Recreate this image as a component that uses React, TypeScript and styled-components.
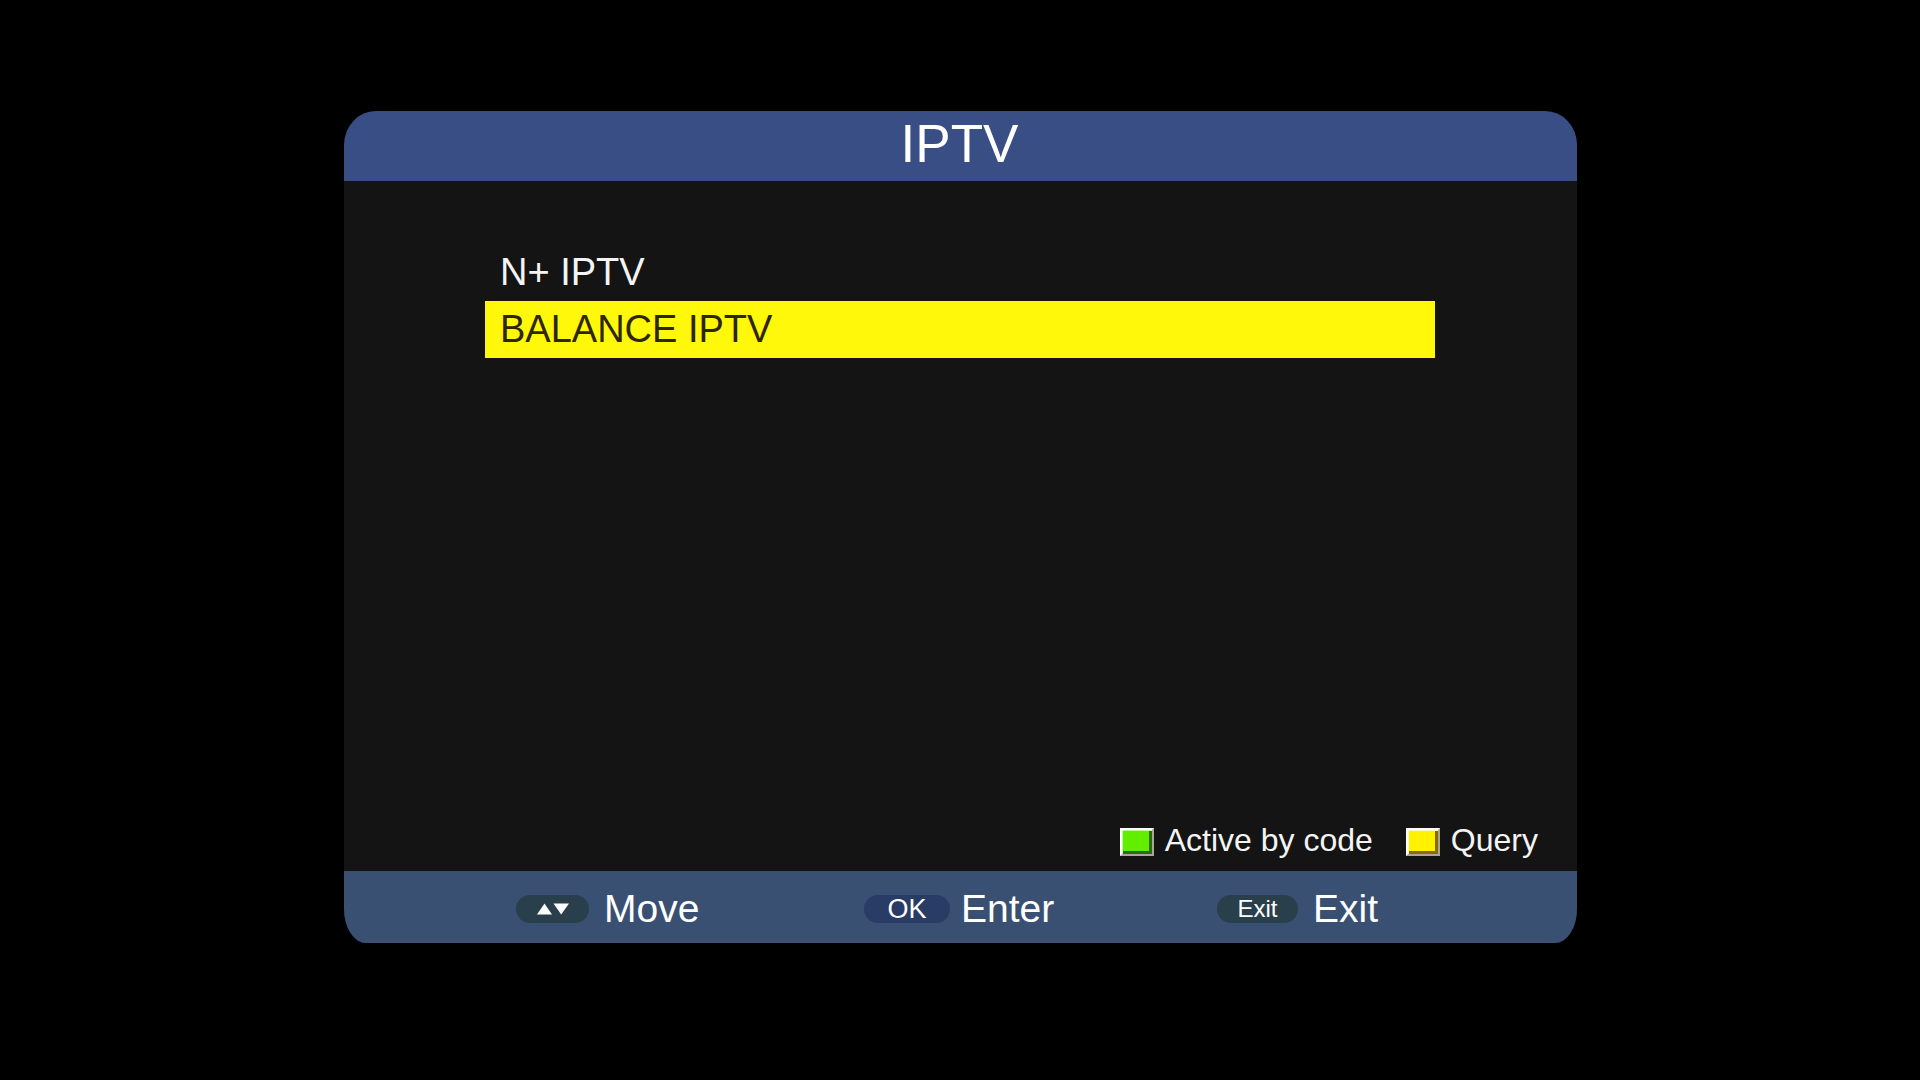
import { useState } from "react";
import styled, { createGlobalStyle } from "styled-components";

const GlobalStyle = createGlobalStyle`
  *, *::before, *::after { box-sizing: border-box; }
  body {
    margin: 0;
    background: #000;
    color: #f4f4f4;
    font-family: "Liberation Sans", Arial, sans-serif;
  }
  button {
    margin: 0;
    padding: 0;
    border: 0;
    background: none;
    color: inherit;
    font: inherit;
    cursor: pointer;
  }
`;

const Screen = styled.main`
  display: flex;
  min-height: 100vh;
  padding: 111px 343px 137px 344px;
`;

const Panel = styled.section`
  display: flex;
  flex: 1;
  flex-direction: column;
  overflow: hidden;
  border-radius: 32px 32px 22px 22px / 34px 34px 34px 34px;
  background: #141414;
`;

const Header = styled.header`
  display: flex;
  align-items: center;
  justify-content: center;
  height: 70px;
  background: #3a4e86;
`;

const Title = styled.h1`
  margin: 0;
  padding: 0 2px 4px 0;
  color: #fff;
  font-size: 53px;
  font-weight: 400;
  line-height: 60px;
`;

const Body = styled.div`
  display: flex;
  flex: 1;
  flex-direction: column;
  justify-content: space-between;
  padding: 63px 39px 7px 141px;
`;

const List = styled.ul`
  margin: 0 103px 0 0;
  padding: 0;
  list-style: none;
`;

const Entry = styled.button<{ $selected: boolean }>`
  display: block;
  width: 100%;
  height: 57px;
  padding: 0 15px 1px;
  background: ${(p) => (p.$selected ? "#fff80a" : "transparent")};
  color: ${(p) => (p.$selected ? "#2e2600" : "#f4f4f4")};
  font-size: 38px;
  line-height: 56px;
  text-align: left;
`;

const Legend = styled.div`
  display: flex;
  justify-content: flex-end;
  gap: 33px;
`;

const ColorKey = styled.button`
  display: flex;
  align-items: center;
  gap: 11px;
  font-size: 32px;
  line-height: 40px;
`;

const Label = styled.span`
  padding-bottom: 4px;
`;

const Swatch = styled.span<{ $fill: string; $light: string; $shade: string }>`
  width: 34px;
  height: 28px;
  border: 2px solid;
  border-color: #fff #a8a898 #a8a898 #fff;
  background: ${(p) => p.$fill};
  box-shadow: inset 1px 1px ${(p) => p.$light}, inset -3px -3px ${(p) => p.$shade};
`;

const Footer = styled.footer`
  display: grid;
  grid-template-columns: 348fr 353fr 360fr;
  align-items: center;
  height: 72px;
  padding-left: 172px;
  background: #395073;
`;

const Hint = styled.button<{ $gap: number }>`
  display: flex;
  align-items: center;
  justify-self: start;
  gap: ${(p) => p.$gap}px;
  padding-top: 4px;
  color: #fff;
  font-size: 39px;
  line-height: 44px;
`;

const Pill = styled.kbd<{ $width: number; $color: string; $size: number }>`
  display: flex;
  align-items: center;
  justify-content: center;
  width: ${(p) => p.$width}px;
  height: 28px;
  border-radius: 14px;
  background: ${(p) => p.$color};
  font-family: inherit;
  font-size: ${(p) => p.$size}px;
  line-height: 28px;
`;

const entries = ["N+ IPTV", "BALANCE IPTV"];

function Arrows() {
  return (
    <svg width="34" height="12" viewBox="0 0 34 12" fill="#fff" aria-hidden="true">
      <path d="M8.5 0.5 L16 11.5 H1 Z" />
      <path d="M17.5 0.5 H33 L25.2 11.5 Z" />
    </svg>
  );
}

export default function App() {
  const [selected, setSelected] = useState(1);

  return (
    <>
      <GlobalStyle />
      <Screen>
        <Panel>
          <Header>
            <Title>IPTV</Title>
          </Header>
          <Body>
            <List>
              {entries.map((name, i) => (
                <li key={name}>
                  <Entry $selected={i === selected} onClick={() => setSelected(i)}>
                    {name}
                  </Entry>
                </li>
              ))}
            </List>
            <Legend>
              <ColorKey>
                <Swatch $fill="#62ee00" $light="#b4ff9a" $shade="#2d6a08" />
                <Label>Active by code</Label>
              </ColorKey>
              <ColorKey>
                <Swatch $fill="#fff200" $light="#fffbc0" $shade="#8a6a08" />
                <Label>Query</Label>
              </ColorKey>
            </Legend>
          </Body>
          <Footer>
            <Hint $gap={15}>
              <Pill $width={73} $color="#2a3f4c" $size={24}>
                <Arrows />
              </Pill>
              Move
            </Hint>
            <Hint $gap={11}>
              <Pill $width={86} $color="#283c66" $size={27}>OK</Pill>
              Enter
            </Hint>
            <Hint $gap={15}>
              <Pill $width={81} $color="#2a3f4c" $size={24}>Exit</Pill>
              Exit
            </Hint>
          </Footer>
        </Panel>
      </Screen>
    </>
  );
}
